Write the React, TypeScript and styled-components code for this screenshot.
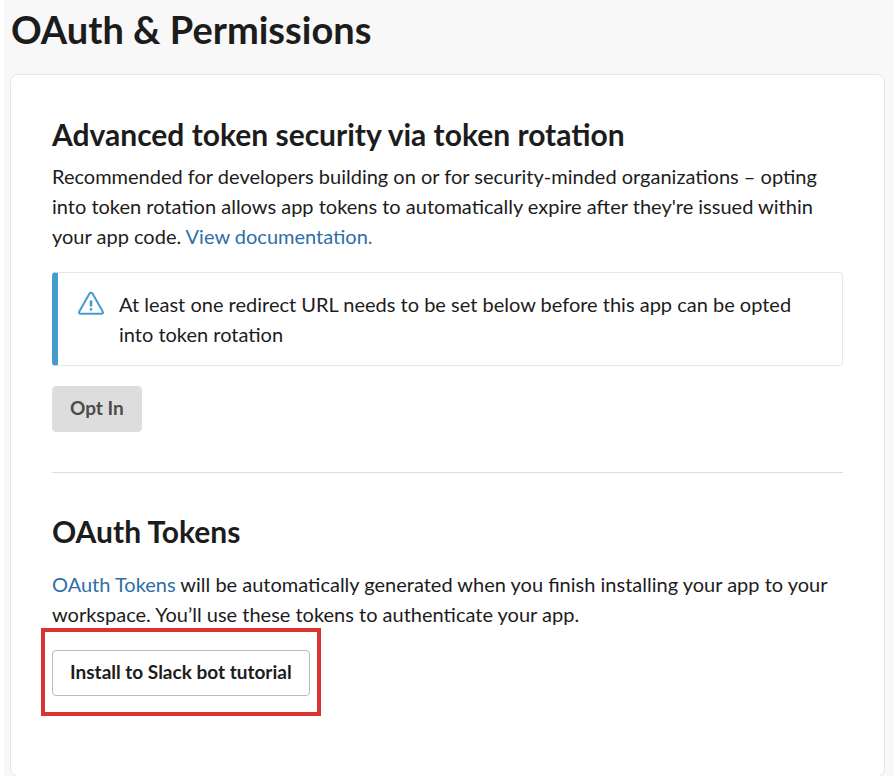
import React from "react";
import styled, { createGlobalStyle } from "styled-components";

const GlobalStyle = createGlobalStyle`
  *, *::before, *::after { box-sizing: border-box; }
  body { margin: 0; background: #f8f8f8; color: #1d1c1d; font-family: Lato, sans-serif; font-size: 20px; line-height: 30px; }
`;

const Page = styled.main`
  min-height: 100vh;
  padding: 7px 9px 0 6px;
  border-left: 4px solid #fff;
  display: flex;
  flex-direction: column;
`;

const Title = styled.h1`
  margin: 0 0 23px;
  padding-left: 1px;
  font-size: 38px;
  line-height: 44px;
  font-weight: 700;
`;

const Card = styled.div`
  flex: 1;
  padding: 39px 41px 60px;
  background: #fff;
  border: 1px solid #e6e6e6;
  border-radius: 8px;
`;

const Section = styled.section``;

const Heading = styled.h2<{ $gap: number }>`
  margin: 0 0 ${(p) => p.$gap}px;
  font-size: 30px;
  line-height: 40px;
  font-weight: 700;
`;

const Text = styled.p`
  margin: 0;
`;

const Link = styled.a`
  color: #2f6ea8;
  text-decoration: none;
`;

const Alert = styled.div`
  display: flex;
  gap: 14px;
  margin: 21px 0 20px;
  padding: 16px 24px 16px 19px;
  border: 1px solid #e8e8e8;
  border-left: 6px solid #439bd0;
  border-radius: 4px;
`;

const AlertIcon = styled.svg`
  flex: none;
  width: 28px;
  height: 28px;
`;

const Button = styled.button<{ $outline?: boolean }>`
  display: block;
  height: 46px;
  padding: 0 17px 2px;
  border: 1px solid ${(p) => (p.$outline ? "#bbb" : "#ddd")};
  border-radius: 4px;
  background: ${(p) => (p.$outline ? "#fff" : "#ddd")};
  color: ${(p) => (p.$outline ? "#1d1c1d" : "#4c4b4c")};
  font: 700 19px/24px Lato, sans-serif;
`;

const Divider = styled.hr`
  height: 1px;
  margin: 40px 0 38px;
  border: 0;
  background: #ddd;
`;

const Highlight = styled.div`
  width: fit-content;
  margin: -1px 0 0 -11px;
  padding: 18px 7px 16px;
  border: 4px solid #d9342f;
`;

export default function App() {
  return (
    <>
      <GlobalStyle />
      <Page>
        <Title>OAuth &amp; Permissions</Title>
        <Card>
          <Section>
            <Heading $gap={7}>Advanced token security via token rotation</Heading>
            <Text>
              Recommended for developers building on or for security-minded organizations – opting into token
              rotation allows app tokens to automatically expire after they're issued within your app code.{" "}
              <Link href="#documentation">View documentation.</Link>
            </Text>
            <Alert role="note">
              <AlertIcon viewBox="0 0 28 28" fill="none" stroke="#439bd0" strokeWidth="2" strokeLinejoin="round" strokeLinecap="round" aria-hidden="true">
                <path d="M12.4 4.7 2.3 22.4c-.8 1.3 0 2.4 1.5 2.4h20.4c1.5 0 2.3-1.1 1.5-2.4L15.6 4.7c-.8-1.3-2.4-1.3-3.2 0Z" />
                <path strokeWidth="2.6" d="M14 12.5v4M14 20.2v.2" />
              </AlertIcon>
              <Text>At least one redirect URL needs to be set below before this app can be opted into token rotation</Text>
            </Alert>
            <Button type="button" disabled>Opt In</Button>
          </Section>
          <Divider />
          <Section>
            <Heading $gap={18}>OAuth Tokens</Heading>
            <Text>
              <Link href="#tokens">OAuth Tokens</Link> will be automatically generated when you finish installing
              your app to your workspace. You’ll use these tokens to authenticate your app.
            </Text>
            <Highlight>
              <Button type="button" $outline>Install to Slack bot tutorial</Button>
            </Highlight>
          </Section>
        </Card>
      </Page>
    </>
  );
}
